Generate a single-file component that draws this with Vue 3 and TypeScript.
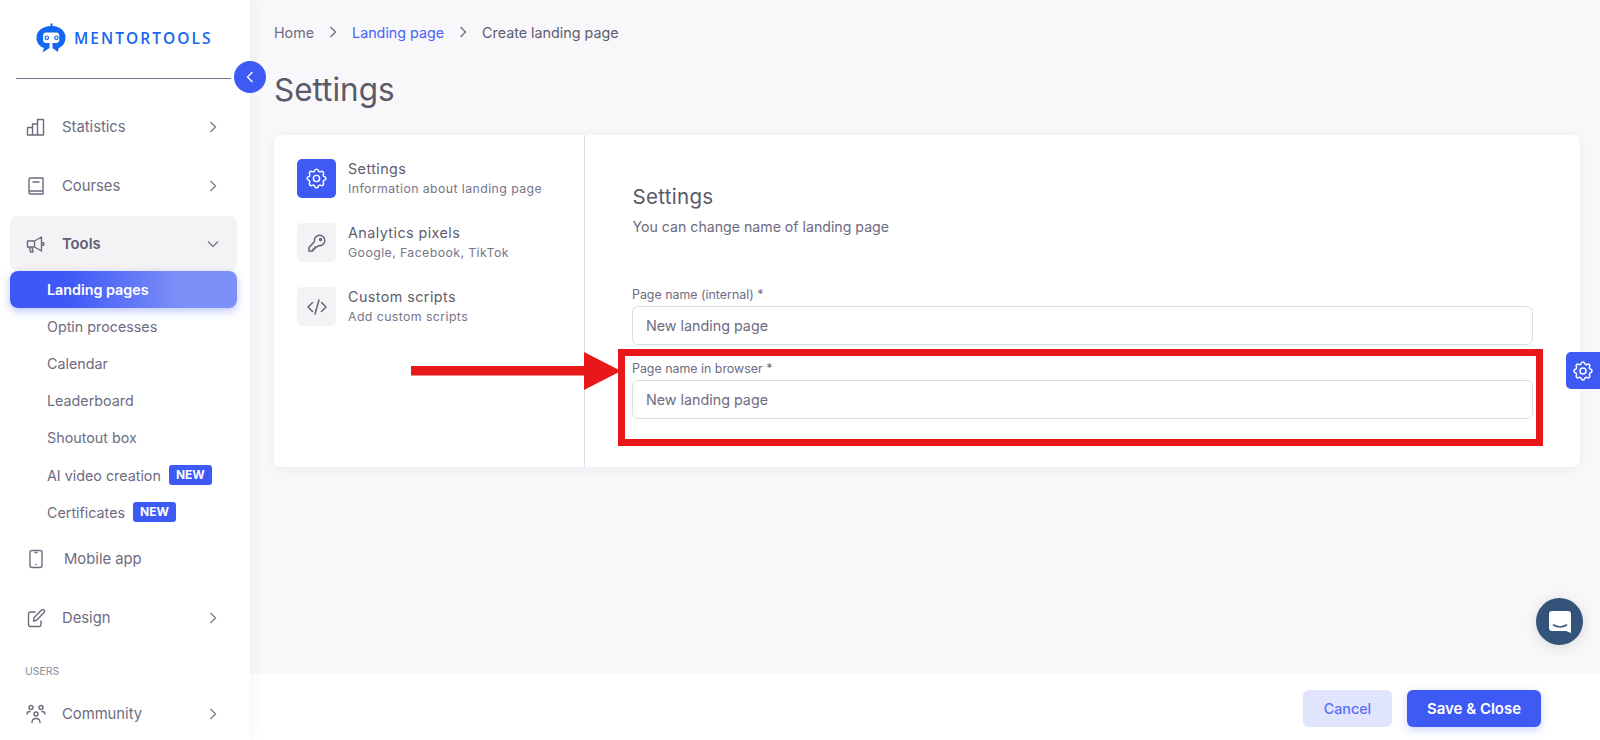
<script setup lang="ts">
const subItems = ['Optin processes', 'Calendar', 'Leaderboard', 'Shoutout box']
const gearPath =
  'M10.325 4.317c.426-1.756 2.924-1.756 3.35 0a1.724 1.724 0 0 0 2.573 1.066c1.543-.94 3.31.826 2.37 2.37a1.724 1.724 0 0 0 1.065 2.572c1.756.426 1.756 2.924 0 3.35a1.724 1.724 0 0 0-1.066 2.573c.94 1.543-.826 3.31-2.37 2.37a1.724 1.724 0 0 0-2.572 1.065c-.426 1.756-2.924 1.756-3.35 0a1.724 1.724 0 0 0-2.573-1.066c-1.543.94-3.31-.826-2.37-2.37a1.724 1.724 0 0 0-1.065-2.572c-1.756-.426-1.756-2.924 0-3.35a1.724 1.724 0 0 0 1.066-2.573c-.94-1.543.826-3.31 2.37-2.37 1 .608 2.296.07 2.572-1.065z'
</script>

<template>
  <div class="app">
    <aside class="sidebar">
      <div class="logo">
        <svg class="logo-mark" viewBox="0 0 30 30" width="30" height="30">
          <path fill="#1467f0" d="M14.500 0.500h2v2.600c7 .4 13 4.600 13 11.400 0 5-2.400 8.600-6.800 10.600l-.9 3.900-5.300-3.900v-5.100h3.900c1.600 0 2.800-1.200 2.800-2.800V12.300c0-1.600-1.200-2.800-2.800-2.800H9.900C8.300 9.500 7.100 10.700 7.100 12.300v4.900c0 1.600 1.200 2.800 2.800 2.800h3.600v5.100L6.500 29.500l1.500-4.400C3 23.100 0.500 19.500 0.500 14.500 0.500 7.700 7 3.500 14.500 3.100z" />
          <circle cx="10.800" cy="14.700" r="1.700" fill="none" stroke="#1467f0" stroke-width="1.200" />
          <circle cx="20.400" cy="14.700" r="1.700" fill="none" stroke="#1467f0" stroke-width="1.200" />
        </svg>
        <span class="logo-text">MENTORTOOLS</span>
      </div>
      <div class="logo-rule"></div>

      <nav class="nav">
        <a class="nav-item">
          <svg class="ico" viewBox="0 0 20 20"><path d="M1.500 10.500h5v7.500h-5zM6.500 7h5v11h-5zM11.500 2.500h6V18h-6z" /></svg>
          <span>Statistics</span>
          <svg class="chev" viewBox="0 0 10 14"><path d="M2.500 2l5 5-5 5" /></svg>
        </a>
        <a class="nav-item">
          <svg class="ico" viewBox="0 0 20 20"><path d="M3 3.500A1.500 1.500 0 0 1 4.500 2H17v16H4.500A1.500 1.500 0 0 1 3 16.500zM3 15h14M7 6h6" /></svg>
          <span>Courses</span>
          <svg class="chev" viewBox="0 0 10 14"><path d="M2.500 2l5 5-5 5" /></svg>
        </a>
        <a class="nav-item tools">
          <svg class="ico" viewBox="0 0 20 20"><path d="M1.500 7h7v6h-7zM8.500 7l7-4v14l-7-4M15.500 8.500c1.500 0 2.500.6 2.500 1.500s-1 1.500-2.500 1.500M3.500 13l1 5h2.500l-1-5" /></svg>
          <span>Tools</span>
          <svg class="chev down" viewBox="0 0 14 10"><path d="M2 2.500l5 5 5-5" /></svg>
        </a>
        <a class="sub-item active">Landing pages</a>
        <a v-for="item in subItems" :key="item" class="sub-item">{{ item }}</a>
        <a class="sub-item">AI video creation <b class="badge">NEW</b></a>
        <a class="sub-item">Certificates <b class="badge">NEW</b></a>
        <a class="nav-item mobile">
          <svg class="ico" viewBox="0 0 20 20"><rect x="4" y="1.500" width="12" height="17" rx="2" /><path d="M9.800 15.500h.4M9 3.500h2" /></svg>
          <span>Mobile app</span>
        </a>
        <a class="nav-item design">
          <svg class="ico" viewBox="0 0 20 20"><path d="M9 4H4.500A2 2 0 0 0 2.500 6v10.500a2 2 0 0 0 2 2h8.500a2 2 0 0 0 2-2V13M7.500 13l.6-3.500L15.500 2a1.500 1.500 0 0 1 2.500 2.500l-7.400 7.700z" /></svg>
          <span>Design</span>
          <svg class="chev" viewBox="0 0 10 14"><path d="M2.500 2l5 5-5 5" /></svg>
        </a>
        <div class="nav-group">USERS</div>
        <a class="nav-item community">
          <svg class="ico" viewBox="0 0 20 20"><circle cx="5" cy="3.500" r="2" /><circle cx="15" cy="3.500" r="2" /><circle cx="10" cy="10" r="2" /><path d="M1 10c0-1.500 1-2.500 3-2.500M19 10c0-1.500-1-2.500-3-2.500M6 18.500c0-2.500 1.500-4 4-4s4 1.500 4 4" /></svg>
          <span>Community</span>
          <svg class="chev" viewBox="0 0 10 14"><path d="M2.500 2l5 5-5 5" /></svg>
        </a>
      </nav>
    </aside>

    <button class="collapse">
      <svg viewBox="0 0 10 14" width="10" height="14"><path d="M7.500 2l-5 5 5 5" /></svg>
    </button>

    <main class="main">
      <div class="content">
        <div class="crumbs">
          <span>Home</span>
          <svg viewBox="0 0 10 14"><path d="M2.500 2l5 5-5 5" /></svg>
          <span class="link">Landing page</span>
          <svg viewBox="0 0 10 14"><path d="M2.500 2l5 5-5 5" /></svg>
          <span class="current">Create landing page</span>
        </div>
        <h1>Settings</h1>

        <section class="card">
          <div class="steps">
            <div class="step">
              <span class="step-ico on">
                <svg class="gear" viewBox="0 0 24 24"><path :d="gearPath" /><circle cx="12" cy="12" r="3" /></svg>
              </span>
              <div>
                <div class="step-title">Settings</div>
                <div class="step-sub">Information about landing page</div>
              </div>
            </div>
            <div class="step">
              <span class="step-ico">
                <svg viewBox="0 0 20 20"><path d="M7.500 8.500a5.200 5.200 0 1 1 4 4L10 14H8v2H6v2H2v-3.500z" /><circle cx="13.500" cy="6.500" r="1" /></svg>
              </span>
              <div>
                <div class="step-title">Analytics pixels</div>
                <div class="step-sub">Google, Facebook, TikTok</div>
              </div>
            </div>
            <div class="step">
              <span class="step-ico">
                <svg viewBox="0 0 20 20"><path d="M5.500 5.500L1 10l4.500 4.500M14.500 5.500L19 10l-4.500 4.500M12 3L8 17" /></svg>
              </span>
              <div>
                <div class="step-title">Custom scripts</div>
                <div class="step-sub">Add custom scripts</div>
              </div>
            </div>
          </div>

          <div class="form">
            <h2>Settings</h2>
            <p>You can change name of landing page</p>
            <label class="first">Page name (internal) *</label>
            <div class="input">New landing page</div>
            <label>Page name in browser *</label>
            <div class="input">New landing page</div>
          </div>
        </section>
      </div>

      <footer class="footer">
        <button class="btn cancel">Cancel</button>
        <button class="btn save">Save &amp; Close</button>
      </footer>
    </main>

    <!-- annotation drawn over the screenshot -->
    <div class="mark-box"></div>
    <svg class="mark-arrow" viewBox="0 0 210 38" width="210" height="38">
      <path fill="#e8171a" d="M0 14h173V0l37 19-37 19V23.500H0z" />
    </svg>

    <button class="side-gear">
      <svg viewBox="0 0 24 24"><path :d="gearPath" /><circle cx="12" cy="12" r="3" /></svg>
    </button>

    <button class="chat">
      <svg viewBox="0 0 22 22" width="22" height="22">
        <path fill="#fff" d="M3 0h16a3 3 0 0 1 3 3v19l-5-2H3a3 3 0 0 1-3-3V3a3 3 0 0 1 3-3z" />
        <path fill="none" stroke="#34537a" stroke-width="1.500" stroke-linecap="round" d="M4.500 14c4 2.400 9 2.400 13 0" />
      </svg>
    </button>
  </div>
</template>

<style>
html,
body {
  margin: 0;
  overflow: hidden;
}
</style>

<style scoped>
.app {
  position: relative;
  display: flex;
  width: 1600px;
  height: 740px;
  overflow: hidden;
  font-family: Inter, "Noto Sans", sans-serif;
  color: #6e6b7f;
  background: #f8f8fb;
}

.sidebar {
  flex: 0 0 250px;
  height: 740px;
  box-sizing: border-box;
  padding-top: 23px;
  background: #fff;
  box-shadow: 0 0 12px rgba(80, 80, 110, 0.08);
  z-index: 2;
}

.logo {
  display: flex;
  align-items: center;
  gap: 8px;
  height: 30px;
  padding-left: 36px;
}

.logo-text {
  font-family: "Open Sans", sans-serif;
  font-size: 15.500px;
  letter-spacing: 2.050px;
  color: #1467f0;
  font-weight: 600;
}

.logo-rule {
  height: 1px;
  margin: 25px 19px 0 16px;
  background: #77758a;
}

.nav {
  display: flex;
  flex-direction: column;
  padding: 18px 13px 0 10px;
}

.nav-item {
  display: flex;
  align-items: center;
  height: 59px;
  padding: 0 19px 0 16px;
  font-size: 14.800px;
  border-radius: 8px;
}

.nav-item > span {
  flex: 1;
  margin-left: 16px;
}

.ico {
  flex: none;
  width: 20px;
  height: 20px;
  fill: none;
  stroke: #6e6b7f;
  stroke-width: 1.400;
  stroke-linejoin: round;
  stroke-linecap: round;
}

.chev {
  width: 10px;
  height: 14px;
  fill: none;
  stroke: #7a7889;
  stroke-width: 1.300;
}

.chev.down {
  width: 14px;
  height: 10px;
  margin-right: -2px;
}

.tools {
  height: 55px;
  margin-top: 1px;
  background: #f3f3f5;
  font-weight: 600;
  color: #5f5c70;
}

.sub-item {
  display: flex;
  align-items: center;
  gap: 8px;
  flex: none;
  height: 37.100px;
  padding-left: 37px;
  font-size: 14.300px;
  border-radius: 8px;
}

.sub-item.active {
  font-weight: 600;
  color: #fff;
  background: linear-gradient(90deg, #3d58f5 25%, #7d8ff8 75%);
  box-shadow: 0 3px 8px rgba(61, 88, 245, 0.35);
}

.badge {
  padding: 1px 7px;
  font-size: 12px;
  font-weight: 700;
  line-height: 18px;
  color: #fff;
  background: #3d5af5;
  border-radius: 3px;
}

.mobile {
  margin-top: -1px;
}

.mobile > span {
  margin-left: 18px;
}

.nav-group {
  height: 17px;
  margin: 15px 0 0 15px;
  font-size: 10.500px;
  line-height: 17px;
  color: #8b8a98;
}

.community {
  height: 68px;
}

.collapse {
  position: absolute;
  top: 61px;
  left: 234px;
  z-index: 3;
  display: flex;
  align-items: center;
  justify-content: center;
  width: 32px;
  height: 32px;
  padding: 0;
  border: 0;
  border-radius: 50%;
  background: #3d5af5;
}

.collapse path {
  fill: none;
  stroke: #fff;
  stroke-width: 1.400;
}

.main {
  display: flex;
  flex: 1;
  flex-direction: column;
  min-width: 0;
}

.content {
  flex: 1;
  padding: 22px 20px 0 24px;
}

.crumbs {
  display: flex;
  align-items: center;
  gap: 14px;
  height: 20px;
  font-size: 14.300px;
  color: #6e6b7f;
}

.crumbs svg {
  width: 10px;
  height: 14px;
  fill: none;
  stroke: #6e6b7f;
  stroke-width: 1.300;
}

.link {
  color: #4a63f5;
}

.current {
  color: #5f5c70;
}

h1 {
  margin: 25px 0 0;
  height: 46px;
  font-size: 31.500px;
  font-weight: 400;
  line-height: 46px;
  color: #5b5869;
}

.card {
  display: flex;
  height: 332px;
  margin-top: 22px;
  background: #fff;
  border-radius: 7px;
  box-shadow: 0 2px 10px rgba(80, 80, 110, 0.07);
}

.steps {
  display: flex;
  flex: 0 0 311px;
  flex-direction: column;
  gap: 25px;
  box-sizing: border-box;
  padding: 24px 0 0 23px;
  border-right: 1px solid #dcdce0;
}

.step {
  display: flex;
  align-items: center;
  gap: 12px;
  height: 39px;
}

.step-ico {
  display: flex;
  flex: none;
  align-items: center;
  justify-content: center;
  width: 39px;
  height: 39px;
  border-radius: 5px;
  background: #f3f3f5;
}

.step-ico svg {
  width: 20px;
  height: 20px;
  fill: none;
  stroke: #66637a;
  stroke-width: 1.500;
  stroke-linejoin: round;
  stroke-linecap: round;
}

.step-ico svg.gear {
  width: 25px;
  height: 25px;
  stroke-width: 1.400;
}

.step-ico.on {
  background: #3d5af5;
}

.step-ico.on svg {
  stroke: #fff;
}

.step-title {
  font-size: 14.300px;
  line-height: 20px;
  letter-spacing: 0.45px;
  color: #5f5c70;
}

.step-sub {
  font-size: 12.300px;
  line-height: 20px;
  letter-spacing: 0.42px;
  color: #77758a;
}

.form {
  flex: 1;
  padding: 49px 47px 0 47px;
}

h2 {
  margin: 0 0 0 0.5px;
  font-size: 20.500px;
  font-weight: 400;
  line-height: 26px;
  letter-spacing: 0.3px;
  color: #5b5869;
}

p {
  margin: 7px 0 0 0.5px;
  font-size: 14.150px;
  line-height: 20px;
  color: #6e6b7f;
}

label {
  display: block;
  height: 20px;
  font-size: 12.400px;
  line-height: 17px;
  color: #6e6b7f;
}

label.first {
  margin-top: 49px;
}

.input {
  box-sizing: border-box;
  height: 39px;
  margin-bottom: 15px;
  padding: 0 13px;
  font-size: 14.300px;
  line-height: 37px;
  color: #6e6b7f;
  background: #fff;
  border: 1px solid #dedee2;
  border-radius: 6px;
}

.footer {
  display: flex;
  flex: 0 0 66px;
  align-items: flex-start;
  justify-content: flex-end;
  gap: 15px;
  box-sizing: border-box;
  padding: 16px 59px 0 0;
  background: #fff;
}

.btn {
  height: 37px;
  border: 0;
  border-radius: 6px;
  font-family: inherit;
  font-size: 14.300px;
  font-weight: 600;
}

.cancel {
  width: 89px;
  font-weight: 500;
  color: #5870f5;
  background: #e1e4fd;
}

.save {
  width: 134px;
  font-size: 15px;
  color: #fff;
  background: #3d5af5;
  box-shadow: 0 3px 8px rgba(61, 88, 245, 0.25);
}

.mark-box {
  position: absolute;
  top: 349px;
  left: 618px;
  box-sizing: border-box;
  width: 925px;
  height: 97px;
  border: 7.500px solid #e8171a;
  z-index: 4;
}

.mark-arrow {
  position: absolute;
  top: 352px;
  left: 411px;
  z-index: 4;
}

.side-gear {
  position: absolute;
  top: 352px;
  left: 1566px;
  display: flex;
  align-items: center;
  justify-content: center;
  width: 34px;
  height: 37px;
  padding: 0;
  border: 0;
  border-radius: 5px 0 0 5px;
  background: #3d5af5;
}

.side-gear svg {
  width: 24px;
  height: 24px;
  fill: none;
  stroke: #fff;
  stroke-width: 1.500;
  stroke-linejoin: round;
}

.chat {
  position: absolute;
  top: 598px;
  left: 1536px;
  display: flex;
  align-items: center;
  justify-content: center;
  width: 47px;
  height: 47px;
  padding: 0;
  border: 0;
  border-radius: 50%;
  background: #34537a;
  box-shadow: 0 2px 14px rgba(0, 0, 0, 0.12);
}
</style>
